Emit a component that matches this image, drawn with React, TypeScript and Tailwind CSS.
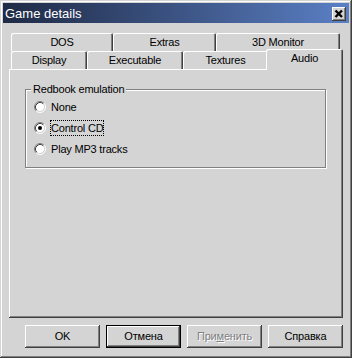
import React from "react";

const bevel = "shadow-[inset_-1px_-1px_#404040,inset_1px_1px_#ffffff,inset_-2px_-2px_#808080]";

const Tab = ({ label, w, selected }: { label: string; w: string; selected?: boolean }) => (
  <div
    className={`${w} ${
      selected ? "relative z-10 h-[21px] -mb-px -ml-[2px]" : "h-[18px]"
    } flex justify-center pt-[3px] rounded-t-[2px] bg-[#d4d4d4] shadow-[inset_1px_1px_#ffffff,inset_-1px_0_#404040,inset_-2px_0_#808080]`}
  >
    {label}
  </div>
);

const Radio = ({ checked }: { checked?: boolean }) => (
  <svg width="12" height="12" viewBox="0 0 12 12" className="shrink-0">
    <circle cx="6" cy="6" r="4.5" fill="#ffffff" />
    <path d="M2.11 9.89 A5.5 5.5 0 0 1 9.89 2.11" fill="none" stroke="#808080" strokeWidth="1" />
    <path d="M9.89 2.11 A5.5 5.5 0 0 1 2.11 9.89" fill="none" stroke="#ffffff" strokeWidth="1" />
    <path d="M2.82 9.18 A4.5 4.5 0 0 1 9.18 2.82" fill="none" stroke="#404040" strokeWidth="1" />
    <path d="M9.18 2.82 A4.5 4.5 0 0 1 2.82 9.18" fill="none" stroke="#d4d4d4" strokeWidth="1" />
    {checked && <circle cx="6" cy="6" r="2" fill="#000000" />}
  </svg>
);

const RadioRow = ({ label, checked, focused }: { label: string; checked?: boolean; focused?: boolean }) => (
  <div className="h-[21px] flex items-center">
    <Radio checked={checked} />
    <span
      className={`ml-[4px] leading-[14px] border border-dotted ${focused ? "border-black" : "border-transparent"}`}
    >
      {label}
    </span>
  </div>
);

const Button = ({ children, isDefault, disabled }: { children: React.ReactNode; isDefault?: boolean; disabled?: boolean }) => (
  <button
    className={`w-[75px] h-[23px] flex items-center justify-center bg-[#d4d4d4] ${bevel} ${
      isDefault ? "border border-black" : ""
    } ${disabled ? "text-[#808080] [text-shadow:1px_1px_0_#ffffff]" : "text-black"}`}
  >
    {children}
  </button>
);

export default function App() {
  return (
    <div className="w-[352px] h-[358px] p-[3px] flex flex-col bg-[#d4d4d4] text-black text-[11px] leading-[13px] tracking-[-0.2px] font-['Liberation_Sans',Arial,sans-serif] shadow-[inset_-1px_-1px_#404040,inset_1px_1px_#d4d4d4,inset_-2px_-2px_#808080,inset_2px_2px_#ffffff]">
      {/* Title bar */}
      <div className="h-[20px] shrink-0 flex items-center bg-linear-to-r from-[#1f2b46] to-[#5b80c6]">
        <span className="pl-[2px] text-white text-[13px] tracking-normal">Game details</span>
        <div className={`ml-auto mr-[3px] mt-[1px] w-[14px] h-[14px] flex items-center justify-center bg-[#d4d4d4] ${bevel}`}>
          <svg width="14" height="14" viewBox="0 0 14 14">
            <path d="M3.5 3.5 L10 10 M10 3.5 L3.5 10" stroke="#000000" strokeWidth="2.4" fill="none" />
          </svg>
        </div>
      </div>

      <div className="px-[6px] pt-[10px] flex flex-col">
        {/* Tabs */}
        <div className="ml-[2px] h-[18px] flex items-end">
          <Tab label="DOS" w="w-[102px]" />
          <Tab label="Extras" w="w-[103px]" />
          <Tab label="3D Monitor" w="w-[124px]" />
        </div>
        <div className="ml-[2px] h-[18px] flex items-end">
          <Tab label="Display" w="w-[76px]" />
          <Tab label="Executable" w="w-[96px]" />
          <Tab label="Textures" w="w-[85px]" />
          <Tab label="Audio" w="w-[77px]" selected />
        </div>

        {/* Panel */}
        <div className={`h-[249px] pt-[20px] pl-[16px] ${bevel}`}>
          <div className="relative w-[301px] h-[79px] border border-[#808080] pt-[6px] pl-[8px] shadow-[1px_1px_0_#ffffff,inset_1px_1px_0_#ffffff]">
            <span className="absolute left-[5px] top-[-7px] px-[2px] bg-[#d4d4d4]">Redbook emulation</span>
            <RadioRow label="None" />
            <RadioRow label="Control CD" checked focused />
            <RadioRow label="Play MP3 tracks" />
          </div>
        </div>

        {/* Buttons */}
        <div className="mt-[7px] ml-[16px] flex gap-[6px]">
          <Button>OK</Button>
          <Button isDefault>Отмена</Button>
          <Button disabled>
            <span>
              При<u className="underline-offset-[1px]">м</u>енить
            </span>
          </Button>
          <Button>Справка</Button>
        </div>
      </div>
    </div>
  );
}
